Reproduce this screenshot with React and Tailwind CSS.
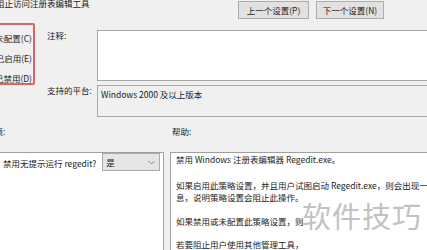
import React from "react";

const font = { fontFamily: '"Noto Sans CJK SC", "Liberation Sans", sans-serif' };

export default function App() {
  return (
    <div
      className="relative w-[427px] h-[250px] overflow-hidden bg-[#f0f0f0] text-[8.5px] text-[#222]"
      style={font}
    >
      {/* top row */}
      <div className="flex h-[30px] items-start">
        <div className="ml-[-4px] mt-[-3px] whitespace-nowrap leading-[12px]">阻止访问注册表编辑工具</div>
        <div className="ml-auto mr-[43px] mt-[1px] flex gap-[7px]">
          <div className="w-[71px] h-[18px] bg-[#e1e1e1] border border-[#adadad] flex items-center justify-center leading-none">上一个设置(P)</div>
          <div className="w-[68px] h-[18px] bg-[#e1e1e1] border border-[#adadad] flex items-center justify-center leading-none">下一个设置(N)</div>
        </div>
      </div>

      {/* middle */}
      <div className="flex h-[92px]">
        <div className="w-[41px] ml-[-6px] shrink-0">
          <div className="mt-[-7px] h-[62px] border-2 border-[#e06464] rounded-[2px] pt-[7px] flex flex-col gap-[8px] items-end pr-[1px] leading-[12px]">
            <div className="whitespace-nowrap">未配置(C)</div>
            <div className="whitespace-nowrap">已启用(E)</div>
            <div className="whitespace-nowrap">已禁用(D)</div>
          </div>
        </div>
        <div className="w-[62px] shrink-0 pl-[12px]">
          <div className="mt-[-1px] leading-[12px]">注释:</div>
          <div className="mt-[43px] leading-[12px] whitespace-nowrap">支持的平台:</div>
        </div>
        <div className="flex-1 mr-[-10px]">
          <div className="h-[51px] bg-white border border-[#a8a8a8]"></div>
          <div className="mt-[4px] h-[32px] bg-[#f0f0f0] border border-[#a8a8a8] pl-[3px] pt-[2px] leading-[12px] whitespace-nowrap">
            Windows 2000 及以上版本
          </div>
        </div>
      </div>

      {/* labels row */}
      <div className="flex h-[30px] items-start pt-[3px] leading-[12px]">
        <div className="ml-[-14px] w-[186px] shrink-0 whitespace-nowrap">选项:</div>
        <div>帮助:</div>
      </div>

      {/* bottom panels */}
      <div className="flex gap-[6px] h-[120px]">
        <div className="w-[165px] ml-[-1px] shrink-0 bg-white border border-[#a0a0a0] flex items-start">
          <div className="flex items-center gap-[6px]">
            <div className="pl-[3px] pt-[1px] leading-[12px] whitespace-nowrap">禁用无提示运行 regedit?</div>
            <div className="w-[58px] h-[18px] bg-[#e5e5e5] border border-[#acacac] flex items-center justify-between px-[3px]">
              <span className="leading-none">是</span>
              <svg width="7" height="5" viewBox="0 0 7 5" className="mr-[1px]">
                <path d="M0.5 1 L3.5 4 L6.5 1" fill="none" stroke="#8a8a8a" strokeWidth="1" />
              </svg>
            </div>
          </div>
        </div>
        <div className="flex-1 mr-[-10px] bg-white border border-[#a0a0a0] pl-[5px] leading-[12px] whitespace-nowrap">
          <div>禁用 Windows 注册表编辑器 Regedit.exe。</div>
          <div className="mt-[14px]">如果启用此策略设置，并且用户试图启动 Regedit.exe，则会出现一条消</div>
          <div>息，说明策略设置会阻止此操作。</div>
          <div className="mt-[12px]">如果禁用或未配置此策略设置，则</div>
          <div className="mt-[11px]">若要阻止用户使用其他管理工具，</div>
        </div>
      </div>

      {/* watermark */}
      <div className="absolute left-[302px] top-[197px] text-[29px] leading-[36px] tracking-[1px] text-[#c2c2c2] whitespace-nowrap">
        软件技巧
      </div>
    </div>
  );
}
